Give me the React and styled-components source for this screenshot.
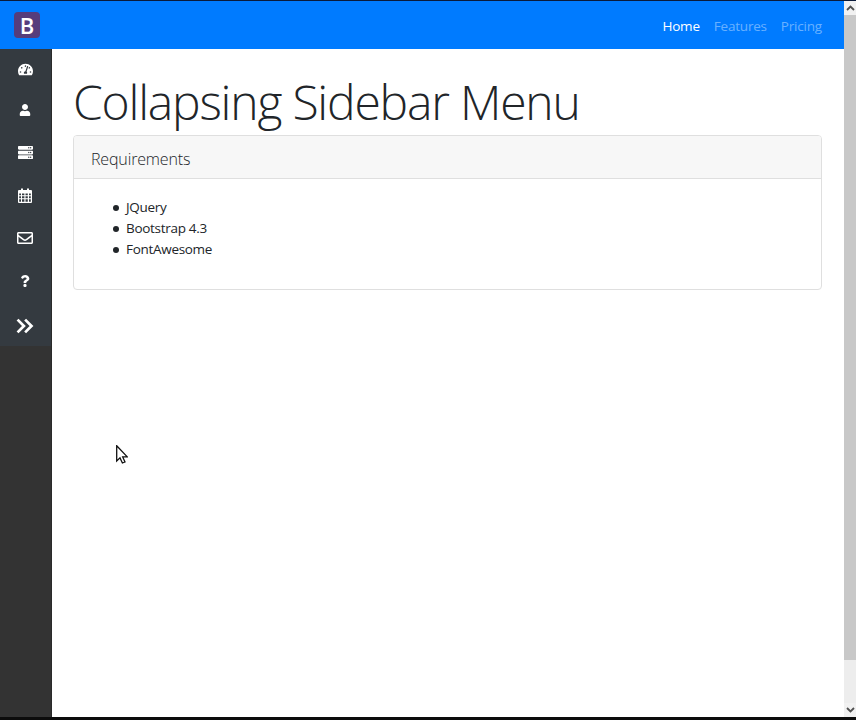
import React from 'react';
import styled, { createGlobalStyle } from 'styled-components';
import { FaTachometerAlt, FaUser, FaServer, FaRegEnvelope, FaQuestion } from 'react-icons/fa';
import { ChevronsRight } from 'lucide-react';

const Global = createGlobalStyle`
  html, body { margin: 0; padding: 0; height: 100%; overflow: hidden; background: #fff; }
  * { box-sizing: border-box; }
  body { font-family: "Open Sans", "Noto Sans", sans-serif; color: #212529; }
`;
const Window = styled.div`
  position: relative; width: 856px; height: 720px; display: flex; flex-direction: column;
  background: #fff; overflow: hidden;
`;
const TitleEdge = styled.div`height: 1px; background: #0a1a3a; flex: none;`;
const BottomEdge = styled.div`height: 3px; background: #0c0c0c; flex: none;`;
const Viewport = styled.div`flex: 1; display: flex; min-height: 0;`;
const Page = styled.div`flex: 1; display: flex; flex-direction: column; min-width: 0;`;
const Navbar = styled.nav`
  height: 48px; flex: none; background: #007bff; display: flex; align-items: center;
  justify-content: space-between; padding: 0 22px 0 14px;
`;
const Brand = styled.div`
  width: 26px; height: 26px; background: #563d7c; border-radius: 4px; color: #fff;
  display: flex; align-items: center; justify-content: center;
  font-family: "Open Sans", sans-serif; font-size: 22px; font-weight: 600; line-height: 1;
`;
const NavLinks = styled.div`display: flex; gap: 14px; padding-top: 2px;`;
const NavLink = styled.a`
  font-size: 13.5px; letter-spacing: -0.2px; color: ${p => p.$active ? '#fff' : 'rgba(255,255,255,.42)'};
`;
const Body = styled.div`flex: 1; display: flex; min-height: 0;`;
const Sidebar = styled.aside`
  width: 52px; flex: none; background: #333; border-right: 1px solid #2a2a2a;
`;
const SideList = styled.div`
  background: #343a40; display: flex; flex-direction: column; height: 297px; padding-right: 1px;
`;
const SideItem = styled.div`
  height: ${p => p.$h}px; flex: none; display: flex; align-items: center; justify-content: center;
  color: #fff; font-size: ${p => p.$size}px;
`;
const Main = styled.main`flex: 1; padding: 24px 22px 0 21px; min-width: 0;`;
const Heading = styled.h1`
  margin: 0 0 4px; font-size: 48px; font-weight: 300; line-height: 58px; color: #212529;
  letter-spacing: -1.2px; white-space: nowrap;
`;
const Card = styled.section`
  border: 1px solid #dfdfdf; border-radius: 4px; background: #fff; height: 155px;
`;
const CardHeader = styled.div`
  height: 43px; background: #f7f7f7; border-bottom: 1px solid #dfdfdf; border-radius: 3px 3px 0 0;
  padding: 4px 17px 0; display: flex; align-items: center;
  font-size: 16px; font-weight: 300; color: #212529; letter-spacing: -0.15px;
`;
const List = styled.ul`
  list-style: none; margin: 0; padding: 18px 0 0 39px; font-size: 13.5px; line-height: 21px;
  letter-spacing: -0.3px; color: #212529;
`;
const Item = styled.li`
  display: flex; align-items: center; gap: 7px;
  &::before { content: ""; width: 6px; height: 6px; border-radius: 50%; background: #212529; flex: none; }
`;
const Scrollbar = styled.div`
  width: 12px; flex: none; background: #ededed; display: flex; flex-direction: column; align-items: stretch;
`;
const ScrollBtn = styled.div`
  height: 14px; flex: none; background: #f1f1f1; display: flex; align-items: center; justify-content: center;
`;
const Thumb = styled.div`height: 645px; flex: none; background: #c8c8c8;`;
const Track = styled.div`flex: 1;`;
const Cursor = styled.svg`position: absolute; left: 116px; top: 445px; width: 12px; height: 19px;`;

const Chevron = ({ up }) => (
  <svg width="9" height="6" viewBox="0 0 9 6">
    <path d={up ? 'M1 5L4.5 1.5L8 5' : 'M1 1L4.5 4.5L8 1'} fill="none" stroke="#505050" strokeWidth="1.8" />
  </svg>
);

const CalendarIcon = () => (
  <svg width="14" height="15" viewBox="0 0 14 15">
    <path fill="#fff" fillRule="evenodd" d="M1 2H3V0.5H5V2H9V0.5H11V2H13A1 1 0 0 1 14 3V14A1 1 0 0 1 13 15H1A1 1 0 0 1 0 14V3A1 1 0 0 1 1 2ZM1.2 5.5V7.2H3V5.5ZM4 5.5V7.2H6.4V5.5ZM7.5 5.5V7.2H9.8V5.5ZM11 5.5V7.2H12.8V5.5ZM1.2 8.2V10.2H3V8.2ZM4 8.2V10.2H6.4V8.2ZM7.5 8.2V10.2H9.8V8.2ZM11 8.2V10.2H12.8V8.2ZM1.2 11.2V13.8H3V11.2ZM4 11.2V13.8H6.4V11.2ZM7.5 11.2V13.8H9.8V11.2ZM11 11.2V13.8H12.8V11.2Z" />
  </svg>
);

export default function App() {
  return (
    <Window>
      <Global />
      <TitleEdge />
      <Viewport>
        <Page>
          <Navbar>
            <Brand>B</Brand>
            <NavLinks>
              <NavLink $active>Home</NavLink>
              <NavLink>Features</NavLink>
              <NavLink>Pricing</NavLink>
            </NavLinks>
          </Navbar>
          <Body>
            <Sidebar>
              <SideList>
                <SideItem $h={40} $size={15}><FaTachometerAlt /></SideItem>
                <SideItem $h={42} $size={12}><FaUser /></SideItem>
                <SideItem $h={42} $size={15}><FaServer /></SideItem>
                <SideItem $h={44} $size={14}><CalendarIcon /></SideItem>
                <SideItem $h={42} $size={16}><FaRegEnvelope /></SideItem>
                <SideItem $h={43} $size={12}><FaQuestion /></SideItem>
                <SideItem $h={47} $size={20}><ChevronsRight size={26} strokeWidth={2.5} strokeLinecap="square" strokeLinejoin="miter" /></SideItem>
              </SideList>
            </Sidebar>
            <Main>
              <Heading>Collapsing Sidebar Menu</Heading>
              <Card>
                <CardHeader>Requirements</CardHeader>
                <List>
                  <Item>JQuery</Item>
                  <Item>Bootstrap 4.3</Item>
                  <Item>FontAwesome</Item>
                </List>
              </Card>
            </Main>
          </Body>
        </Page>
        <Scrollbar>
          <ScrollBtn><Chevron up /></ScrollBtn>
          <Thumb />
          <Track />
          <ScrollBtn><Chevron /></ScrollBtn>
        </Scrollbar>
      </Viewport>
      <BottomEdge />
      <Cursor viewBox="0 0 12 19">
        <path d="M0.7 0.7V16L4 12.9L6.4 18L9 17L6.7 11.9H11.3Z" fill="#fff" stroke="#111" strokeWidth="1.3" />
      </Cursor>
    </Window>
  );
}
